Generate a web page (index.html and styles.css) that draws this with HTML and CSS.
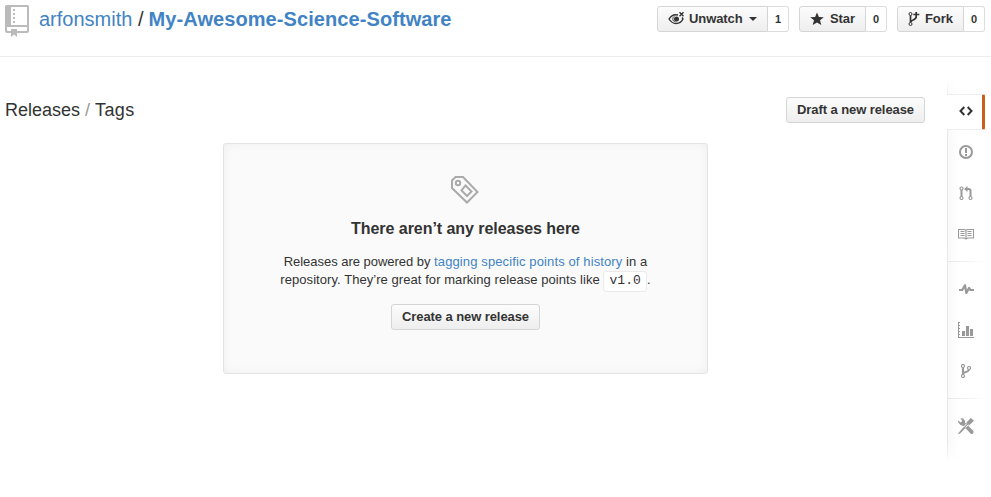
FILE: index.html
```html
<!DOCTYPE html>
<html lang="en">
<head>
<meta charset="utf-8">
<title>Releases · arfonsmith/My-Awesome-Science-Software</title>
<link rel="stylesheet" href="styles.css">
</head>
<body>
<header class="repo-head">
  <svg class="repo-icon" width="24" height="32" viewBox="0 0 24 32">
    <path fill="#bbb" fill-rule="evenodd" d="M1.500 0H22.500Q24 0 24 1.500V26Q24 28 22 28H12V26H21Q22 26 22 25V22H2V25Q2 26 3 26H6V28H2Q0 28 0 26V1.500Q0 0 1.500 0ZM6 2V20H22V2Z"/>
    <path fill="#bbb" d="M8 4h2v2H8zM8 8h2v2H8zM8 12h2v2H8zM8 16h2v2H8zM6 24h6v8l-3-2.600L6 32z"/>
  </svg>
  <h1 class="repo-title"><a class="owner">arfonsmith</a><span class="slash">/</span><a class="repo-name">My-Awesome-Science-Software</a></h1>
  <ul class="actions">
    <li class="action watch">
      <a class="btn action-btn">
        <svg width="17" height="16" viewBox="0 0 17 16"><path fill="none" stroke="#333" stroke-width="1.400" d="M10 4C5.500 2.800 2.500 5.500 1 8c2 3.200 4.500 4.500 7 4.500S13.500 11.200 15 8l-1-1.500"/><path fill="none" stroke="#333" d="M6.500 5.200C4 6.500 4.200 10.500 7.500 10.800"/><circle cx="8.500" cy="8" r="2.500" fill="#333"/><path stroke="#333" stroke-width="1.400" d="M11.500 1.300l4 4M15.500 1.300l-4 4"/></svg>
        <span class="label">Unwatch</span><i class="caret"></i>
      </a><a class="count">1</a>
    </li>
    <li class="action star">
      <a class="btn action-btn">
        <svg width="14" height="14" viewBox="0 0 14 14"><path fill="#333" d="M7 .4l1.900 4.500 4.900.3-3.800 3.100 1.300 4.800L7 10.500l-4.300 2.600L4 8.300.2 5.200l4.900-.3z"/></svg>
        <span class="label">Star</span>
      </a><a class="count">0</a>
    </li>
    <li class="action fork">
      <a class="btn action-btn">
        <svg width="12" height="16" viewBox="0 0 12 16"><g fill="none" stroke="#333"><circle cx="2.500" cy="3" r="1.500"/><circle cx="2.500" cy="13" r="1.500"/><path stroke-width="1.700" d="M2.500 4.500v7M2.700 11c.5-2.600 5.500-1.300 5.500-5.500V1M5.300 3.500h6"/></g></svg>
        <span class="label">Fork</span>
      </a><a class="count">0</a>
    </li>
  </ul>
</header>
<div class="layout">
  <main class="content">
    <div class="subhead">
      <h2 class="crumb"><span>Releases</span><span class="crumb-slash">/</span><span class="crumb-tags">Tags</span></h2>
      <a class="btn draft-btn"><span>Draft a new release</span></a>
    </div>
    <section class="blank">
      <svg class="tag" width="28" height="28" viewBox="0 0 28 28"><g fill="none" stroke="#aaa" stroke-width="2"><path d="M4.500 1H12L26.500 16 16 26.500 1 12V4.500z"/><circle cx="7" cy="7" r="2.200"/><path d="M14.500 9.500l6 6-4.500 4.500-5.500-5.500z"/></g></svg>
      <h3 class="blank-title">There aren’t any releases here</h3>
      <p class="blank-text"><span class="lead">Releases are powered by</span> <a class="link">tagging specific points of history</a> in a<br>repository. They’re great for marking release points like <code>v1.0</code>.</p>
      <a class="btn create-btn"><span>Create a new release</span></a>
    </section>
  </main>
  <nav class="side">
    <a class="item active"><svg width="14" height="10" viewBox="0 0 14 10"><path fill="none" stroke="#333" stroke-width="2" d="M5.300 1L1.500 5l3.800 4M8.700 1l3.800 4-3.800 4"/></svg></a>
    <a class="item"><svg width="14" height="14" viewBox="0 0 14 14"><circle cx="7" cy="7" r="6" fill="none" stroke="#999" stroke-width="2"/><path fill="#999" d="M6 3h2v5H6zM6 9h2v2H6z"/></svg></a>
    <a class="item"><svg width="14" height="16" viewBox="0 0 14 16"><g fill="none" stroke="#999" stroke-width="1.200"><circle cx="2.500" cy="3.500" r="1.500"/><circle cx="2.500" cy="13" r="1.500"/><circle cx="11.500" cy="13" r="1.500"/><path stroke-width="2" d="M2.500 5v6.500M11.500 11.500V6q0-2-2-2H8"/></g><path fill="#999" d="M8.500 1v6L5 4z"/></svg></a>
    <a class="item"><svg width="16" height="12" viewBox="0 0 16 12"><path fill="none" stroke="#999" stroke-width="1.100" d="M8 2Q7 1.500 5.500 1.500H.5v8.500h6L8 11l1.500-1h6V1.500h-5Q9 1.500 8 2zV11M2.500 3.500H6.500M2.500 5.500h4M2.500 7.500h4M9.500 3.500h4M9.500 5.500h4M9.500 7.500h4"/></svg></a>
    <i class="rule"></i>
    <a class="item"><svg width="15" height="12" viewBox="0 0 15 12"><path fill="none" stroke="#999" stroke-width="2.200" stroke-linejoin="round" d="M0 7h3.200L6 2.200 7.300 10 10 5l1.500 2H15"/></svg></a>
    <a class="item"><svg width="16" height="16" viewBox="0 0 16 16"><path fill="#999" d="M0 0h1v15h15v1H0zM1 0h1v1H1zM1 3h1v1H1zM1 6h1v1H1zM1 9h1v1H1zM1 12h1v1H1zM4 9h3v5H4zM8 4h3v10H8zM12 7h3v7h-3z"/></svg></a>
    <a class="item"><svg width="10" height="14" viewBox="0 0 10 14"><g fill="none" stroke="#999" stroke-width="1.200"><circle cx="2" cy="2" r="1.500"/><circle cx="2" cy="12" r="1.500"/><circle cx="8" cy="4" r="1.500"/><path stroke-width="2" d="M2 3.500v7M2.200 9.500C3 7.500 7.800 8.500 8 5.500"/></g></svg></a>
    <i class="rule"></i>
    <a class="item"><svg width="16" height="16" viewBox="0 0 16 16"><path fill="#999" d="M12.800 0L16 2.800 11.500 7 9 8.500 2 15.500 .5 16 0 15.500 7 7.500 8.500 4.500zM2.500 0l2.600.4L7 2.800v2L15.500 13v1.500L14.500 16H13L5.500 8 2.500 7 0 4V2.500L2.800 4.500 4.200 3z"/><path stroke="#fff" d="M8.600 5.600L5.800 8.900M7.600 9.600l2.800-3"/></svg></a>
  </nav>
</div>
</body>
</html>
```
FILE: styles.css
```css
* { box-sizing: border-box; }
body { margin: 0; background: #fff; color: #333; font: 13px/18px "Liberation Sans", Arial, sans-serif; }
h1, h2, h3, p, ul { margin: 0; padding: 0; }
svg { display: block; flex: none; }
a { color: #4183c4; text-decoration: none; }

.repo-head { display: flex; align-items: flex-start; height: 57px; padding: 5px 6px 0 5px; border-bottom: 1px solid #eee; }
.repo-title { display: flex; margin-left: 10px; font-size: 20px; line-height: 28px; font-weight: 400; white-space: nowrap; }
.slash { margin: 0 5px 0 6px; }
.owner { width: 93px; }
.repo-name { font-weight: 700; letter-spacing: .08px; }

.actions { display: flex; gap: 10px; margin: 1px 0 0 auto; list-style: none; }
.action { display: flex; height: 26px; }
.btn { display: flex; align-items: center; height: 26px; border: 1px solid #d5d5d5; border-radius: 3px; background: linear-gradient(#fcfcfc, #eee); color: #333; font-size: 13px; font-weight: 700; line-height: 24px; letter-spacing: -.08px; white-space: nowrap; }
.action-btn { border-radius: 3px 0 0 3px; padding-left: 10px; }
.count { flex: 1; border: 1px solid #ddd; border-left: 0; border-radius: 0 3px 3px 0; color: #333; font-size: 11px; font-weight: 700; line-height: 24px; text-align: center; }
.watch { width: 132px; }
.watch .action-btn { width: 111px; }
.watch .label { margin-left: 4px; }
.star { width: 88px; }
.star .action-btn { width: 67px; }
.star .label { margin-left: 6px; }
.fork { width: 88px; }
.fork .action-btn { width: 67px; }
.fork .label { margin-left: 5px; }
.caret { margin: 0 0 1px 6px; border: 4px solid transparent; border-top-color: #333; border-bottom: 0; }

.layout { display: flex; align-items: flex-start; padding-right: 6px; }
.content { width: 925px; padding-top: 40px; }
.subhead { display: flex; justify-content: space-between; height: 46px; padding-left: 5px; }
.crumb { display: flex; font-size: 18px; font-weight: 400; line-height: 26px; }
.crumb-slash { margin: 0 5px; color: #999; }
.crumb-tags { letter-spacing: .4px; }
.draft-btn { width: 139px; justify-content: center; }

.blank { display: flex; flex-direction: column; align-items: center; width: 485px; height: 231px; margin-left: 223px; padding-top: 32px; border: 1px solid #e4e4e4; border-radius: 3px; background: #fafafa; box-shadow: inset 0 0 10px rgba(0,0,0,.05); }
.tag { margin-right: 1px; }
.blank-title { margin-top: 13px; font-size: 16px; line-height: 24px; letter-spacing: -.05px; }
.blank-text { height: 36px; margin-top: 12px; text-align: center; white-space: nowrap; letter-spacing: .06px; }
.lead { letter-spacing: -.03px; }
.link { letter-spacing: .12px; }
code { display: inline-block; height: 21px; padding: 0 5px; border: 1px solid #eaeaea; border-radius: 3px; background: #fff; font: 13px/17px "Liberation Mono", monospace; letter-spacing: .1px; vertical-align: top; margin: 0 0 -3px; }
.create-btn { width: 149px; margin-top: 15px; justify-content: center; }

.side { display: flex; flex-direction: column; width: 38px; height: 383px; margin: 23px 0 0 22px; padding-top: 14px; background: linear-gradient(#fff, transparent 20px, transparent 363px, #fff), linear-gradient(90deg, #e8e8e8 1px, #f9f9f9 1px, #fff 12px); }
.item { display: flex; align-items: center; justify-content: center; height: 36px; margin-bottom: 5px; }
.item.active { margin-bottom: 4px; border: solid #eee; border-width: 1px 0; border-right: 3px solid #c9601a; border-radius: 0 2px 2px 0; background: #fff; padding: 0 0 2px 3px; }
.rule { height: 1px; margin: 4px 0 9px; background: linear-gradient(90deg, #e5e5e5, #fff); }
```
